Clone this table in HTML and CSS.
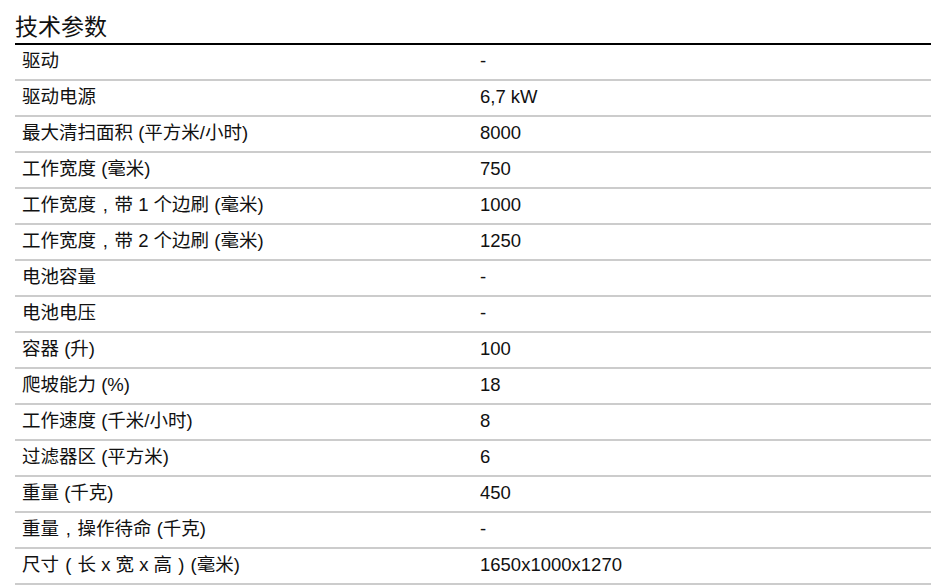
FILE: index.html
```html
<!DOCTYPE html>
<html lang="zh">
<head>
<meta charset="utf-8">
<link rel="stylesheet" href="styles.css">
</head>
<body>
<section class="specs">
  <h2 class="specs-title">技术参数</h2>
  <table class="specs-table">
    <tr><td class="label">驱动</td><td class="value">-</td></tr>
    <tr><td class="label">驱动电源</td><td class="value">6,7 kW</td></tr>
    <tr><td class="label">最大清扫面积 (平方米/小时)</td><td class="value">8000</td></tr>
    <tr><td class="label">工作宽度 (毫米)</td><td class="value">750</td></tr>
    <tr><td class="label">工作宽度<span class="punct">,</span>带 1 个边刷 (毫米)</td><td class="value">1000</td></tr>
    <tr><td class="label">工作宽度<span class="punct">,</span>带 2 个边刷 (毫米)</td><td class="value">1250</td></tr>
    <tr><td class="label">电池容量</td><td class="value">-</td></tr>
    <tr><td class="label">电池电压</td><td class="value">-</td></tr>
    <tr><td class="label">容器 (升)</td><td class="value">100</td></tr>
    <tr><td class="label">爬坡能力 (%)</td><td class="value">18</td></tr>
    <tr><td class="label">工作速度 (千米/小时)</td><td class="value">8</td></tr>
    <tr><td class="label">过滤器区 (平方米)</td><td class="value">6</td></tr>
    <tr><td class="label">重量 (千克)</td><td class="value">450</td></tr>
    <tr><td class="label">重量<span class="punct">,</span>操作待命 (千克)</td><td class="value">-</td></tr>
    <tr><td class="label">尺寸<span class="punct">(</span>长 x 宽 x 高<span class="punct">)</span>(毫米)</td><td class="value">1650x1000x1270</td></tr>
  </table>
</section>
</body>
</html>
```
FILE: styles.css
```css
html, body {
  margin: 0;
  padding: 0;
  background: #fff;
}
body {
  font-family: "Liberation Sans", "Noto Sans CJK SC", sans-serif;
  color: #111;
}
.specs {
  width: 916px;
  margin-left: 15px;
  padding-top: 12px;
}
.specs-title {
  margin: 0;
  font-size: 23px;
  font-weight: normal;
  line-height: 30px;
  height: 31px;
  border-bottom: 2px solid #000;
  color: #111;
}
.specs-table {
  width: 100%;
  border-collapse: collapse;
  font-size: 18.5px;
}
.specs-table td {
  height: 31px;
  padding: 0 0 3px 0;
  line-height: 20px;
  border-bottom: 2px solid #ccc;
  vertical-align: middle;
}
.specs-table .label {
  width: 458px;
  padding-left: 7px;
}
.specs-table .value {
  padding-left: 0;
}
.punct {
  display: inline-block;
  width: 1em;
  text-align: center;
}
```
